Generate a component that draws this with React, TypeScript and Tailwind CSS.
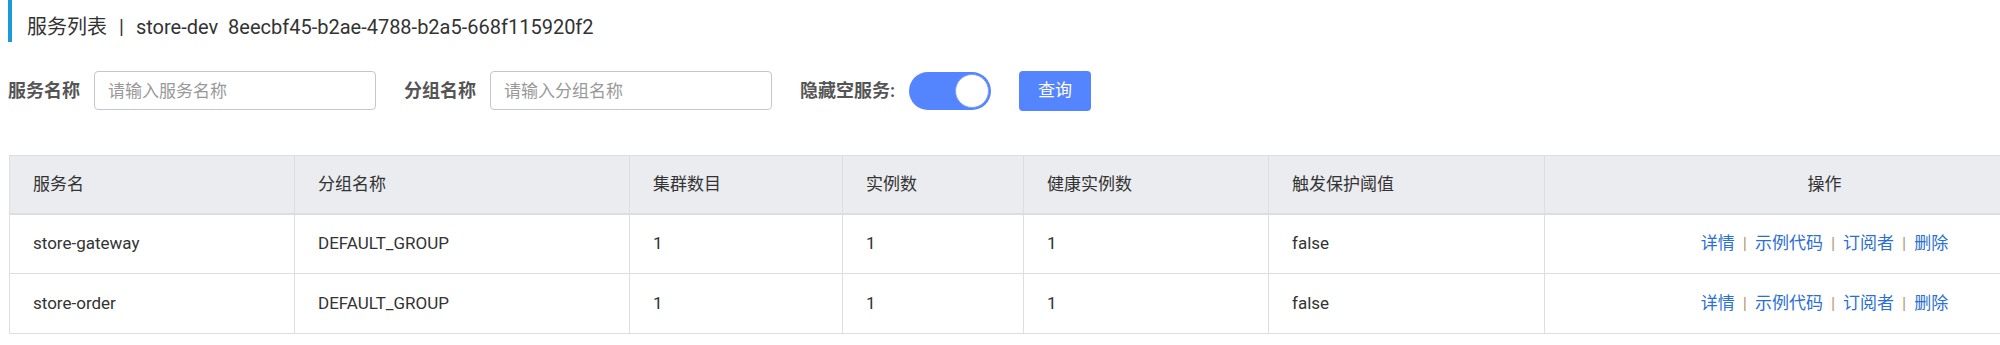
import React from "react";

const font = "font-['Roboto','Noto_Sans_CJK_SC',sans-serif]";

const columns = [
    { title: "服务名", width: 285 },
    { title: "分组名称", width: 335 },
    { title: "集群数目", width: 213 },
    { title: "实例数", width: 181 },
    { title: "健康实例数", width: 245 },
    { title: "触发保护阈值", width: 276 },
    { title: "操作", width: 560 },
];

const rows = [
    { name: "store-gateway", group: "DEFAULT_GROUP", clusters: 1, instances: 1, healthy: 1, threshold: "false" },
    { name: "store-order", group: "DEFAULT_GROUP", clusters: 1, instances: 1, healthy: 1, threshold: "false" },
];

const actions = ["详情", "示例代码", "订阅者", "删除"];

function FormLabel({ children }: { children: React.ReactNode }) {
    return <label className="text-[18px] font-bold text-[#555] mr-[14px] whitespace-nowrap">{children}</label>;
}

function TextInput({ placeholder }: { placeholder: string }) {
    return (
        <input
            placeholder={placeholder}
            className="w-[282px] h-[39px] rounded-[4px] border border-[#c4c6cf] px-[13px] text-[17px] text-[#333] placeholder:text-[#999] outline-none"
        />
    );
}

function Toggle() {
    return (
        <div className="w-[82px] h-[38px] rounded-full bg-[#5584ff] flex items-center justify-end p-[2px]">
            <div className="w-[34px] h-[34px] rounded-full bg-white border border-[#7da0ff]" />
        </div>
    );
}

export default function App() {
    return (
        <div className={`w-[2000px] h-[345px] overflow-hidden bg-white text-[#333] ${font}`}>
            <div className="ml-2 h-[42px] border-l-4 border-[#1a9bd7] pl-[15px] flex items-center pt-[12px]">
                <span className="text-[20px] whitespace-nowrap">
                    服务列表<span className="mx-[12px]">|</span>store-dev&nbsp;&nbsp;8eecbf45-b2ae-4788-b2a5-668f115920f2
                </span>
            </div>

            <div className="flex items-center pl-2 mt-[29px] h-[39px]">
                <div className="flex items-center mr-[28px]">
                    <FormLabel>服务名称</FormLabel>
                    <TextInput placeholder="请输入服务名称" />
                </div>
                <div className="flex items-center mr-[28px]">
                    <FormLabel>分组名称</FormLabel>
                    <TextInput placeholder="请输入分组名称" />
                </div>
                <div className="flex items-center mr-[28px]">
                    <FormLabel>隐藏空服务:</FormLabel>
                    <Toggle />
                </div>
                <button className="w-[72px] h-[40px] rounded-[4px] bg-[#5584ff] text-white text-[17px]">查询</button>
            </div>

            <div className="ml-[9px] mt-[45px]">
                <table className="table-fixed border-collapse w-[2095px] text-[17px]">
                    <colgroup>
                        {columns.map((c) => (
                            <col key={c.title} style={{ width: c.width }} />
                        ))}
                    </colgroup>
                    <thead>
                        <tr className="bg-[#ebecf0] h-[58px]">
                            {columns.map((c, i) => (
                                <th
                                    key={c.title}
                                    className={`border border-[#dcdee3] border-b-2 font-normal px-[23px] ${
                                        i === columns.length - 1 ? "text-center" : "text-left"
                                    }`}
                                >
                                    {c.title}
                                </th>
                            ))}
                        </tr>
                    </thead>
                    <tbody>
                        {rows.map((r) => (
                            <tr key={r.name} className="h-[60px]">
                                <td className="border border-[#dcdee3] px-[23px]">{r.name}</td>
                                <td className="border border-[#dcdee3] px-[23px]">{r.group}</td>
                                <td className="border border-[#dcdee3] px-[23px]">{r.clusters}</td>
                                <td className="border border-[#dcdee3] px-[23px]">{r.instances}</td>
                                <td className="border border-[#dcdee3] px-[23px]">{r.healthy}</td>
                                <td className="border border-[#dcdee3] px-[23px]">{r.threshold}</td>
                                <td className="border border-[#dcdee3] px-[23px] text-center">
                                    {actions.map((a, i) => (
                                        <React.Fragment key={a}>
                                            {i > 0 && <span className="text-[#b89a70] mx-[8px]">|</span>}
                                            <a className="text-[#2b6fd6] cursor-pointer">{a}</a>
                                        </React.Fragment>
                                    ))}
                                </td>
                            </tr>
                        ))}
                    </tbody>
                </table>
            </div>
        </div>
    );
}
